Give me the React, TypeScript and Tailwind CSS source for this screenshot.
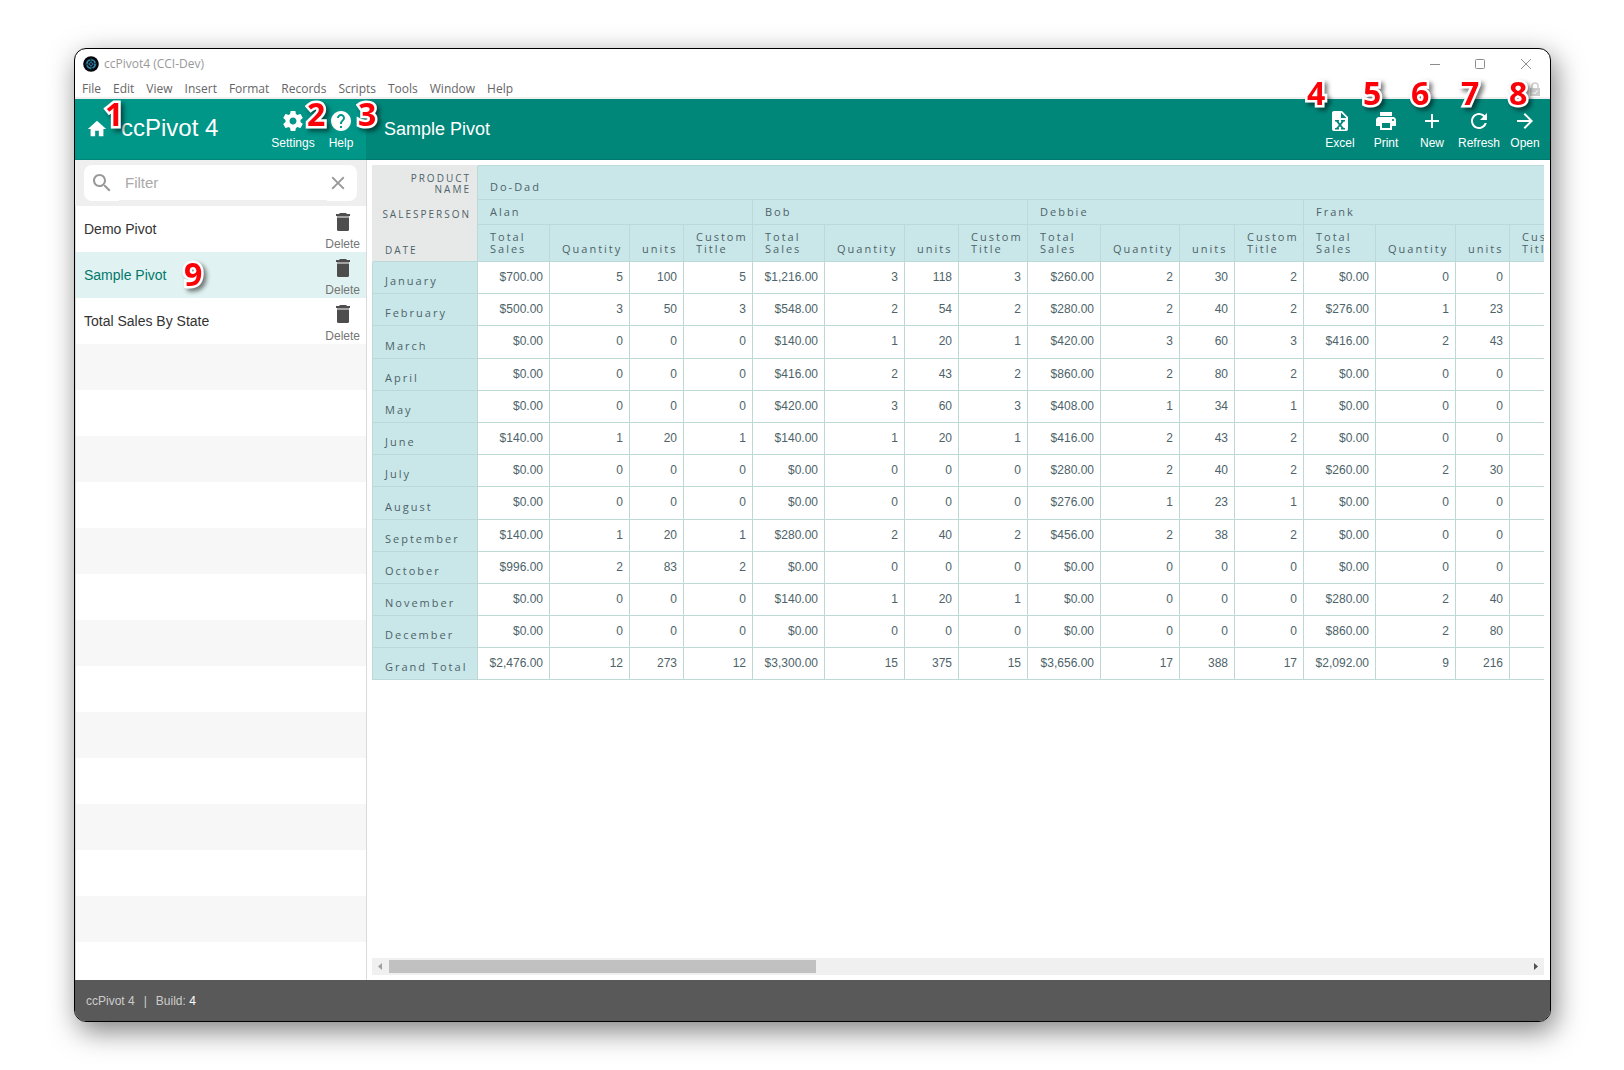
import { type ReactNode } from "react";

const menus = ["File", "Edit", "View", "Insert", "Format", "Records", "Scripts", "Tools", "Window", "Help"];
const pivots = ["Demo Pivot", "Sample Pivot", "Total Sales By State"];
const people = ["Alan", "Bob", "Debbie", "Frank"];

const rows: [string, string][] = [
  ["January", "$700.00 5 100 5 $1,216.00 3 118 3 $260.00 2 30 2 $0.00 0 0 0"],
  ["February", "$500.00 3 50 3 $548.00 2 54 2 $280.00 2 40 2 $276.00 1 23 1"],
  ["March", "$0.00 0 0 0 $140.00 1 20 1 $420.00 3 60 3 $416.00 2 43 2"],
  ["April", "$0.00 0 0 0 $416.00 2 43 2 $860.00 2 80 2 $0.00 0 0 0"],
  ["May", "$0.00 0 0 0 $420.00 3 60 3 $408.00 1 34 1 $0.00 0 0 0"],
  ["June", "$140.00 1 20 1 $140.00 1 20 1 $416.00 2 43 2 $0.00 0 0 0"],
  ["July", "$0.00 0 0 0 $0.00 0 0 0 $280.00 2 40 2 $260.00 2 30 2"],
  ["August", "$0.00 0 0 0 $0.00 0 0 0 $276.00 1 23 1 $0.00 0 0 0"],
  ["September", "$140.00 1 20 1 $280.00 2 40 2 $456.00 2 38 2 $0.00 0 0 0"],
  ["October", "$996.00 2 83 2 $0.00 0 0 0 $0.00 0 0 0 $0.00 0 0 0"],
  ["November", "$0.00 0 0 0 $140.00 1 20 1 $0.00 0 0 0 $280.00 2 40 2"],
  ["December", "$0.00 0 0 0 $0.00 0 0 0 $0.00 0 0 0 $860.00 2 80 2"],
  ["Grand Total", "$2,476.00 12 273 12 $3,300.00 15 375 15 $3,656.00 17 388 17 $2,092.00 9 216 9"],
];
const tallRows = ["March", "August"];

const icons = {
  home: "M10 20v-6h4v6h5v-8h3L12 3 2 12h3v8z",
  gear: "M19.43 12.98c.04-.32.07-.64.07-.98s-.03-.66-.07-.98l2.11-1.65c.19-.15.24-.42.12-.64l-2-3.46c-.12-.22-.39-.3-.61-.22l-2.49 1c-.52-.4-1.08-.73-1.69-.98l-.38-2.65C14.46 2.18 14.25 2 14 2h-4c-.25 0-.46.18-.49.42l-.38 2.65c-.61.25-1.17.59-1.69.98l-2.49-1c-.23-.09-.49 0-.61.22l-2 3.46c-.13.22-.07.49.12.64l2.11 1.65c-.04.32-.07.65-.07.98s.03.66.07.98l-2.11 1.65c-.19.15-.24.42-.12.64l2 3.46c.12.22.39.3.61.22l2.49-1c.52.4 1.08.73 1.69.98l.38 2.65c.03.24.24.42.49.42h4c.25 0 .46-.18.49-.42l.38-2.65c.61-.25 1.17-.59 1.69-.98l2.49 1c.23.09.49 0 .61-.22l2-3.46c.12-.22.07-.49-.12-.64l-2.11-1.65zM12 15.5c-1.93 0-3.5-1.57-3.5-3.5s1.57-3.5 3.5-3.5 3.5 1.57 3.5 3.5-1.57 3.5-3.5 3.5z",
  help: "M12 2C6.48 2 2 6.48 2 12s4.48 10 10 10 10-4.48 10-10S17.52 2 12 2zm1 17h-2v-2h2v2zm2.07-7.75l-.9.92C13.45 12.9 13 13.5 13 15h-2v-.5c0-1.1.45-2.1 1.17-2.83l1.24-1.26c.37-.36.59-.86.59-1.41 0-1.1-.9-2-2-2s-2 .9-2 2H8c0-2.21 1.79-4 4-4s4 1.79 4 4c0 .88-.36 1.68-.93 2.25z",
  excel: "M6 2c-1.1 0-2 .9-2 2v16c0 1.1.9 2 2 2h12c1.1 0 2-.9 2-2V8l-6-6H6zm7 1.5L18.500 9H13V3.500zM7 11h4v1.500h-.6l1.600 2 1.600-2h-.6V11h4v1.500h-1.200L13.100 15.900l2.700 3.100H17v1.500h-4V19h.6L12 17.200 10.400 19h.6v1.500H7V19h1.200l2.700-3.100-2.700-3.400H7z",
  print: "M19 8H5c-1.660 0-3 1.340-3 3v6h4v4h12v-4h4v-6c0-1.660-1.340-3-3-3zm-3 11H8v-5h8v5zm3-7c-.55 0-1-.45-1-1s.45-1 1-1 1 .45 1 1-.45 1-1 1zm-1-9H6v4h12V3z",
  plus: "M19 13h-6v6h-2v-6H5v-2h6V5h2v6h6v2z",
  refresh: "M17.650 6.350C16.200 4.900 14.210 4 12 4c-4.420 0-7.990 3.580-7.990 8s3.570 8 7.990 8c3.730 0 6.840-2.550 7.730-6h-2.080c-.82 2.330-3.040 4-5.650 4-3.310 0-6-2.690-6-6s2.690-6 6-6c1.660 0 3.140.69 4.220 1.780L13 11h7V4l-2.350 2.350z",
  arrow: "M12 4l-1.410 1.410L16.170 11H4v2h12.170l-5.580 5.590L12 20l8-8z",
  search: "M15.500 14h-.79l-.28-.27C15.410 12.590 16 11.110 16 9.500 16 5.910 13.090 3 9.500 3S3 5.910 3 9.500 5.910 16 9.500 16c1.610 0 3.090-.59 4.230-1.570l.27.28v.79l5 4.990L20.490 19l-4.990-5zm-6 0C7.010 14 5 11.990 5 9.500S7.010 5 9.500 5 14 7.010 14 9.500 11.990 14 9.500 14z",
  close: "M19 6.410L17.590 5 12 10.590 6.410 5 5 6.410 10.590 12 5 17.590 6.410 19 12 13.410 17.590 19 19 17.590 13.410 12z",
};

function Icon({ name, className }: { name: keyof typeof icons; className: string }) {
  return (
    <svg viewBox="0 0 24 24" className={className} fill="currentColor" aria-hidden="true">
      <path d={icons[name]} />
    </svg>
  );
}

function Marker({ n, className }: { n: number; className: string }) {
  return (
    <span
      className={`pointer-events-none absolute z-10 font-['Open_Sans',sans-serif] text-[32px] leading-8 font-bold text-[#fb0007] [paint-order:stroke_fill] [-webkit-text-stroke:5px_white] [filter:drop-shadow(3px_3px_2px_rgba(0,0,0,0.5))] ${className}`}
    >
      {n}
    </span>
  );
}

function Tool({ icon, label, width, children }: { icon: keyof typeof icons; label: string; width: string; children?: ReactNode }) {
  return (
    <button className={`relative flex flex-col items-center pt-[3px] text-white ${width}`}>
      <Icon name={icon} className="size-6" />
      <span className="mt-[2px] text-xs leading-[17px] whitespace-nowrap">{label}</span>
      {children}
    </button>
  );
}

function TrashIcon() {
  return (
    <svg width="16" height="20" viewBox="0 0 16 20" aria-hidden="true">
      <path d="M4.500 1h7v1H15v2H1V2h3.500z" fill="#4d4d4d" />
      <path d="M2 4h12v2H2z" fill="#a3a3a3" />
      <path d="M2 6h12v11.500q0 1.500-1.500 1.500h-9Q2 19 2 17.500z" fill="#4d4d4d" />
    </svg>
  );
}

function TitleBar() {
  return (
    <div className="flex h-[30px] shrink-0 items-center pl-2">
      <svg viewBox="0 0 16 16" className="size-4" aria-hidden="true">
        <circle cx="8" cy="8" r="7.800" fill="#05080b" />
        <circle cx="8" cy="8" r="4.200" fill="none" stroke="#2f7fa3" strokeWidth="1.600" strokeDasharray="5 1.600" />
        <path d="M8 2.500v11M2.500 8h11" stroke="#2f7fa3" strokeWidth=".8" />
        <circle cx="8" cy="8" r="1.700" fill="#0d2634" stroke="#3b8fb5" strokeWidth=".6" />
      </svg>
      <span className="ml-[5px] font-['Open_Sans',sans-serif] text-xs text-[#999]">ccPivot4 (CCI-Dev)</span>
      <div className="ml-auto flex text-[#8c8c8c]">
        <button aria-label="Minimize" className="flex w-[46px] justify-center">
          <svg width="12" height="12" fill="none" stroke="currentColor"><path d="M1 6.500h10" /></svg>
        </button>
        <button aria-label="Maximize" className="flex w-[44px] justify-center">
          <svg width="12" height="12" fill="none" stroke="currentColor"><rect x="1.500" y="1.500" width="9" height="9" rx="1" /></svg>
        </button>
        <button aria-label="Close" className="flex w-[48px] justify-center">
          <svg width="12" height="12" fill="none" stroke="currentColor"><path d="M1 1l10 10M11 1L1 11" /></svg>
        </button>
      </div>
    </div>
  );
}

function Header() {
  return (
    <header className="flex h-[61px] shrink-0 text-white">
      <div className="flex w-[291px] shrink-0 items-center border-b border-[#00877a] bg-[#009688] pl-[11px]">
        <button aria-label="Home" className="relative">
          <Icon name="home" className="size-[22px]" />
          <Marker n={1} className="-top-5 left-[19px]" />
        </button>
        <h1 className="ml-[13px] pb-[2px] text-2xl leading-7 whitespace-nowrap">ccPivot 4</h1>
        <div className="ml-auto flex">
          <Tool icon="gear" label="Settings" width="w-[46px]">
            <Marker n={2} className="-top-2 left-[37px]" />
          </Tool>
          <Tool icon="help" label="Help" width="w-[50px]">
            <Marker n={3} className="-top-2 left-[42px]" />
          </Tool>
        </div>
      </div>
      <div className="flex flex-1 items-center border-b border-[#007a6e] bg-[#00877a] pr-[3px] pl-[18px]">
        <h2 className="text-lg">Sample Pivot</h2>
        <div className="ml-auto flex">
          <Tool icon="excel" label="Excel" width="w-[46px]"><Marker n={4} className="-top-[29px] -left-[10px]" /></Tool>
          <Tool icon="print" label="Print" width="w-[46px]"><Marker n={5} className="-top-[29px] left-0" /></Tool>
          <Tool icon="plus" label="New" width="w-[46px]"><Marker n={6} className="-top-[29px] left-[2px]" /></Tool>
          <Tool icon="refresh" label="Refresh" width="w-[48px]"><Marker n={7} className="-top-[29px] left-[6px]" /></Tool>
          <Tool icon="arrow" label="Open" width="w-[44px]"><Marker n={8} className="-top-[29px] left-[6px]" /></Tool>
        </div>
      </div>
    </header>
  );
}

function Sidebar() {
  return (
    <aside className="flex w-[292px] shrink-0 flex-col border-r border-[#d9d9d9] bg-white">
      <div className="h-[46px] shrink-0 bg-[#efefef] px-[9px] pt-[5px]">
        <label className="flex h-9 items-center rounded-lg bg-white pr-2 pl-[6px] text-[#999]">
          <Icon name="search" className="size-6" />
          <input placeholder="Filter" aria-label="Filter" className="ml-[5px] h-9 min-w-0 flex-1 border-b border-[#efefef] pl-[6px] text-[15px] outline-none placeholder:text-[#a9a9a9]" />
          <button aria-label="Clear filter"><Icon name="close" className="size-[22px]" /></button>
        </label>
      </div>
      <ul className="flex-1 overflow-hidden border-l border-[#ddd] bg-[repeating-linear-gradient(#f7f7f7_0_46px,#fff_46px_92px)] bg-[position:0_46px]">
        {pivots.map((name) => (
          <li key={name} className={`flex h-[46px] items-center justify-between pr-[6px] pl-2 ${name === "Sample Pivot" ? "bg-[#e0f2f1] text-[#00796b]" : "bg-white text-[#333]"}`}>
            <a href="#" className="relative text-[14px]">
              {name}
              {name === "Sample Pivot" && <Marker n={9} className="-top-[7px] left-[100px]" />}
            </a>
            <button className="flex flex-col items-center pt-[7px] text-xs leading-[17px] text-[#757575]">
              <TrashIcon />
              <span className="pt-1">Delete</span>
            </button>
          </li>
        ))}
      </ul>
    </aside>
  );
}

const head = "border border-[#bcd9d9] bg-[#c9e7e8] px-3 text-left align-bottom font-medium";
const corner = "border-l border-[#e7e9e8] bg-[#e7e9e8] pb-[5px] align-bottom text-[10px] leading-[11px] font-medium";

function PivotTable() {
  return (
    <table className="w-[1206px] table-fixed border-collapse text-xs text-[#4d6369]">
      <colgroup>
        <col className="w-[105px]" />
        {people.map((p) => [
          <col key={p + "a"} className={p === "Debbie" ? "w-[73px]" : "w-[72px]"} />,
          <col key={p + "b"} className={p === "Debbie" ? "w-[79px]" : "w-[80px]"} />,
          <col key={p + "c"} className={p === "Debbie" ? "w-[55px]" : "w-[54px]"} />,
          <col key={p + "d"} className="w-[69px]" />,
        ])}
      </colgroup>
      <thead className="font-['Open_Sans',sans-serif] text-[11px] leading-3 tracking-[2px]">
        <tr className="h-[34px]">
          <th className={`${corner} border-t pr-[6px] text-right`}>PRODUCT NAME</th>
          <th colSpan={16} className={`${head} pb-[6px]`}>Do-Dad</th>
        </tr>
        <tr className="h-[25px]">
          <th className={`${corner} pr-[6px] text-right`}>SALESPERSON</th>
          {people.map((p) => <th key={p} colSpan={4} className={`${head} pb-[6px]`}>{p}</th>)}
        </tr>
        <tr className="h-[37px]">
          <th className={`${corner} pl-3 text-left`}>DATE</th>
          {people.map((p) => ["Total Sales", "Quantity", "units", "Custom Title"].map((t) => (
            <th key={p + t} className={`${head} pr-0 pb-[6px]`}>{t}</th>
          )))}
        </tr>
      </thead>
      <tbody>
        {rows.map(([month, cells]) => (
          <tr key={month} className={tallRows.includes(month) ? "h-[33px]" : "h-8"}>
            <th className={`${head} pr-0 pb-[5px] font-['Open_Sans',sans-serif] text-[11px] leading-[14px] tracking-[2px] whitespace-nowrap`}>{month}</th>
            {cells.split(" ").map((v, i) => (
              <td key={i} className="border border-[#bcd9d4] pt-[7px] pr-[6px] text-right align-top leading-4">{v}</td>
            ))}
          </tr>
        ))}
      </tbody>
    </table>
  );
}

export default function App() {
  return (
    <div className="h-screen bg-white pt-12 pr-[73px] pb-12 pl-[74px] font-['Liberation_Sans',Arial,sans-serif]">
      <div className="flex h-full flex-col overflow-hidden rounded-xl border border-black bg-white shadow-[4px_9px_28px_0_rgba(0,0,0,0.5)]">
        <TitleBar />
        <nav className="flex h-5 shrink-0 items-center justify-between border-b-2 border-[#efefef] pt-[2px] pr-[9px] pl-[7px] font-['Open_Sans',sans-serif] text-xs text-[#666]">
          <div className="flex gap-3">
            {menus.map((m) => <button key={m}>{m}</button>)}
          </div>
          <svg width="12" height="14" viewBox="0 0 12 14" aria-hidden="true">
            <path d="M3 6V4a3 3 0 0 1 6 0v2" fill="none" stroke="#ccc" strokeWidth="1.500" />
            <path d="M1 6h10v8H1z" fill="#ccc" />
            <path d="M3.500 10l2 2 3-3.500" fill="none" stroke="#fff" />
          </svg>
        </nav>
        <Header />
        <div className="flex min-h-0 flex-1">
          <Sidebar />
          <main className="flex min-w-0 flex-1 flex-col bg-white py-[5px] pr-[6px] pl-[5px]">
            <div className="min-h-0 flex-1 overflow-hidden"><PivotTable /></div>
            <div className="flex h-[17px] items-center bg-[#f0f0f0]">
              <svg width="17" height="17" aria-hidden="true"><path d="M10 5v7L6 8.500z" fill="#a0a0a0" /></svg>
              <div className="flex flex-1"><div className="h-[13px] w-3/8 bg-[#c1c1c1]" /></div>
              <svg width="17" height="17" aria-hidden="true"><path d="M7 5v7l4-3.500z" fill="#505050" /></svg>
            </div>
          </main>
        </div>
        <footer className="flex h-[41px] shrink-0 items-center bg-[#595959] pl-[11px] text-xs text-[#ccc]">
          <span>ccPivot 4</span>
          <span className="px-[9px]">|</span>
          <span>Build: <span className="text-white">4</span></span>
        </footer>
      </div>
    </div>
  );
}
